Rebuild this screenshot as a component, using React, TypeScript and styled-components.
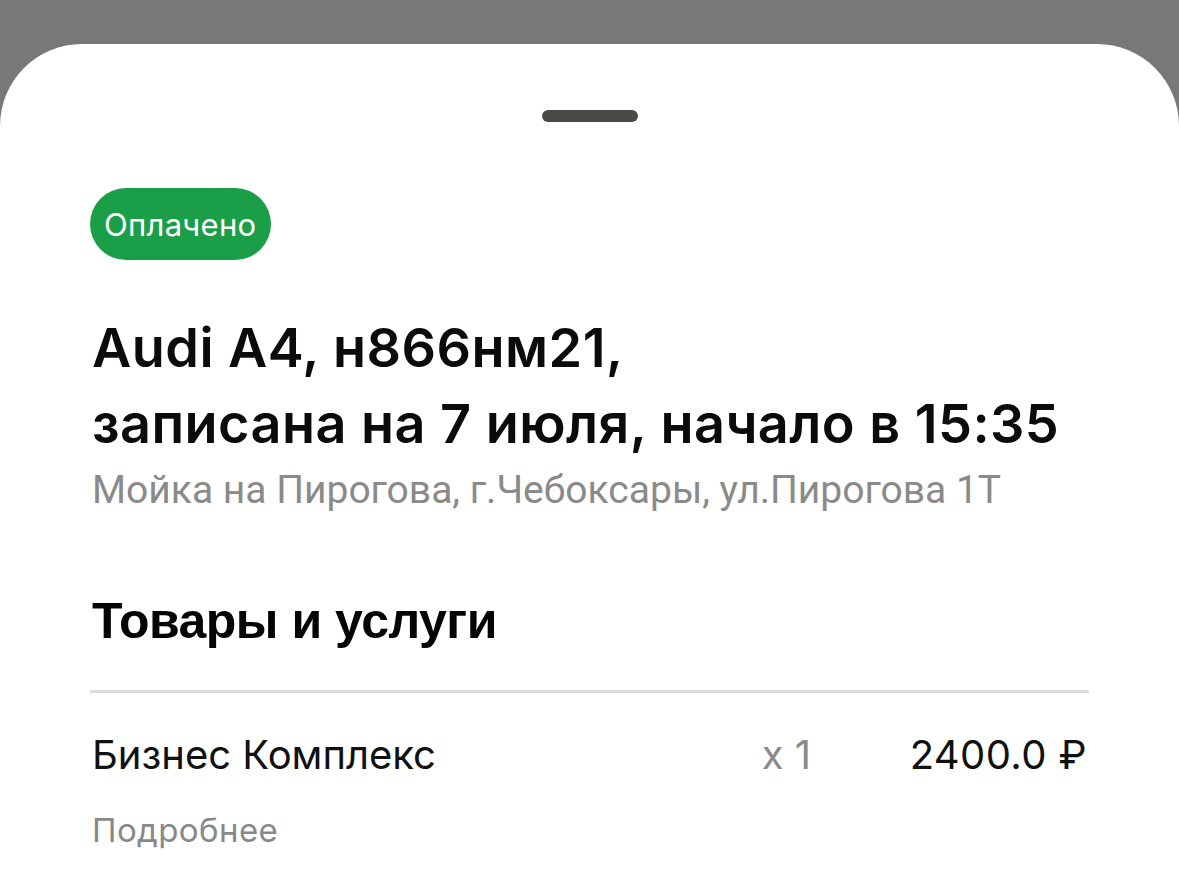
import React from "react";
import styled, { createGlobalStyle } from "styled-components";

const GlobalStyle = createGlobalStyle`
  html, body {
    margin: 0;
    padding: 0;
    background: #787878;
    font-family: Inter, "Noto Sans", sans-serif;
    -webkit-font-smoothing: antialiased;
  }
`;

const Backdrop = styled.div`
  width: 1179px;
  height: 884px;
  padding-top: 44px;
  box-sizing: border-box;
  overflow: hidden;
  background: #787878;
`;

const Sheet = styled.div`
  height: 100%;
  background: #fff;
  border-radius: 82px 82px 0 0;
  padding: 66px 92px 0 92px;
  box-sizing: border-box;
  display: flex;
  flex-direction: column;
`;

const Handle = styled.div`
  align-self: center;
  width: 96px;
  height: 12px;
  border-radius: 6px;
  background: #4a4b47;
  margin-bottom: 66px;
`;

const Badge = styled.div`
  align-self: flex-start;
  height: 72px;
  padding: 0 15px 0 14px;
  margin-left: -2px;
  border-radius: 36px;
  background: #1a9e47;
  color: #fff;
  font-size: 31px;
  letter-spacing: 0.3px;
  display: flex;
  align-items: center;
`;

const Title = styled.h1`
  margin: 50px 0 0;
  font-size: 54px;
  line-height: 76px;
  font-weight: 600;
  color: #0b0b0b;
  letter-spacing: 0.45px;
`;

const Address = styled.div`
  margin-top: 4px;
  font-size: 39px;
  line-height: 48px;
  color: #8a8a8a;
  font-family: Roboto, sans-serif;
`;

const SectionTitle = styled.h2`
  margin: 77px 0 0;
  font-size: 50px;
  line-height: 60px;
  font-weight: 700;
  color: #050505;
  font-family: "Liberation Sans", Arial, sans-serif;
  letter-spacing: -0.5px;
`;

const Divider = styled.div`
  height: 3px;
  background: #dcdcdc;
  margin: 39px -2px 0;
`;

const ItemRow = styled.div`
  display: flex;
  align-items: center;
  margin-top: 37px;
  font-size: 40px;
  line-height: 50px;
`;

const ItemName = styled.span`
  flex: 1;
  color: #111;
`;

const Qty = styled.span`
  color: #8a8a8a;
  width: 148px;
`;

const Price = styled.span`
  color: #111;
  font-weight: 400;
  letter-spacing: 0.4px;
`;

const MoreLink = styled.div`
  margin-top: 30px;
  font-size: 33px;
  line-height: 40px;
  color: #888;
  letter-spacing: 0.4px;
`;

export default function App() {
  return (
    <>
      <GlobalStyle />
      <Backdrop>
        <Sheet>
          <Handle />
          <Badge>Оплачено</Badge>
          <Title>
            Audi A4, н866нм21,
            <br />
            записана на 7 июля, начало в 15:35
          </Title>
          <Address>Мойка на Пирогова, г.Чебоксары, ул.Пирогова 1Т</Address>
          <SectionTitle>Товары и услуги</SectionTitle>
          <Divider />
          <ItemRow>
            <ItemName>Бизнес Комплекс</ItemName>
            <Qty>x 1</Qty>
            <Price>2400.0 ₽</Price>
          </ItemRow>
          <MoreLink>Подробнее</MoreLink>
        </Sheet>
      </Backdrop>
    </>
  );
}
